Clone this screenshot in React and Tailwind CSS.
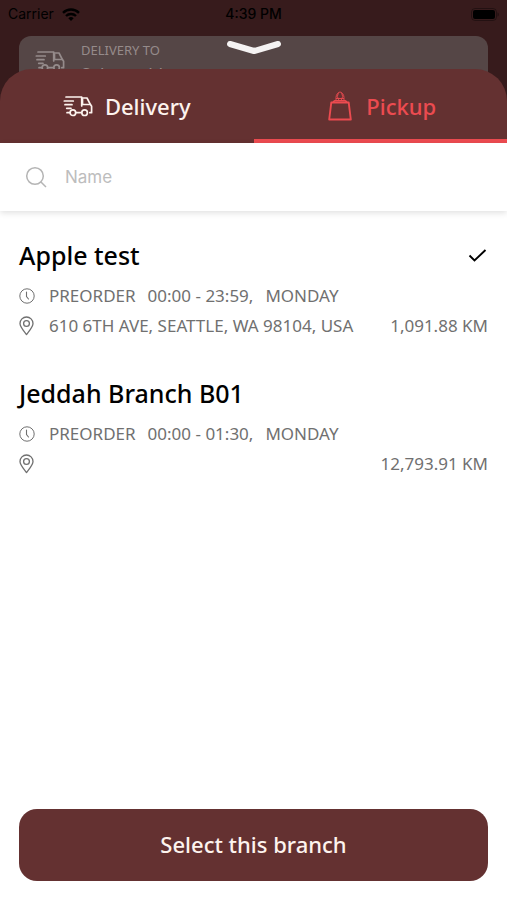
import { useState } from 'react'

const branches = [
  {
    id: 1,
    name: 'Apple test',
    hours: '00:00 - 23:59,',
    day: 'MONDAY',
    address: '610 6TH AVE, SEATTLE, WA 98104, USA',
    distance: '1,091.88 KM'
  },
  {
    id: 2,
    name: 'Jeddah Branch B01',
    hours: '00:00 - 01:30,',
    day: 'MONDAY',
    address: '',
    distance: '12,793.91 KM'
  }
]

function TruckIcon({ className }) {
  return (
    <svg className={className} viewBox="0 0 30 22" fill="none" stroke="currentColor" strokeWidth="1.700" strokeLinecap="round" strokeLinejoin="round" aria-hidden="true">
      <path d="M3 2h15.700v9M1.300 6h9M2 9.700h7M3.700 13.300h4.300M4 17.700h3" />
      <path d="M18.700 3h5.300l3.300 6.300 1.300 2v6.400h-1.800M12.800 17.700h5.700" />
      <path d="M19.500 4v5.500h7.500" />
      <circle cx="9.900" cy="17.700" r="2.800" />
      <circle cx="21.600" cy="17.700" r="2.800" />
    </svg>
  )
}

function BagIcon({ className }) {
  return (
    <svg className={className} viewBox="0 0 24 30" fill="none" stroke="currentColor" strokeLinejoin="round" aria-hidden="true">
      <path strokeWidth="1.900" d="M3.300 11.500h17.400l2.100 17H1.200z" />
      <path strokeWidth="1.500" d="M5 11l2-1.300h10l2 1.300" />
      <path strokeWidth="0.900" d="M8 9.500V6.500C8 4 10 1 12 1s4 3 4 5.500v3M10.500 1.700L9.300 5.500l1.700 4M13.500 1.700l1.200 3.800-1.700 4M8 7.500h8" />
    </svg>
  )
}

function ClockIcon() {
  return (
    <svg className="w-4 h-4 shrink-0" viewBox="0 0 16 16" fill="none" stroke="currentColor" aria-hidden="true">
      <circle cx="8" cy="8" r="7.200" strokeWidth="1" />
      <path strokeWidth="1.100" strokeLinecap="round" d="M7.500 4v4.500l2 2.500" />
    </svg>
  )
}

function PinIcon() {
  return (
    <svg className="w-4 h-5 shrink-0" viewBox="0 0 16 20" fill="none" stroke="currentColor" strokeWidth="1.300" strokeLinejoin="round" aria-hidden="true">
      <path d="M7.500 18.500C4.500 14.500 1 11 1 7.500a6.500 6.500 0 0 1 13 0c0 3.500-3.500 7-6.500 11z" />
      <circle cx="7.500" cy="7.500" r="2.900" />
    </svg>
  )
}

function StatusBar() {
  return (
    <div className="grid grid-cols-3 items-center h-7 px-2 text-sm text-black font-['Inter','Liberation_Sans',sans-serif]">
      <div className="flex items-center gap-2">
        <span>Carrier</span>
        <svg className="w-[18px] h-[13px]" viewBox="0 0 18 13" fill="none" stroke="currentColor" strokeWidth="2.400" aria-hidden="true">
          <path d="M1 4.800a11.500 11.500 0 0 1 16 0" />
          <path d="M4 8a7.200 7.200 0 0 1 10 0" />
          <path d="M6.300 10.200L9 13l2.700-2.800a4 4 0 0 0-5.400 0z" fill="currentColor" stroke="none" />
        </svg>
      </div>
      <span className="text-center font-medium">4:39 PM</span>
      <svg className="w-7 h-[13px] justify-self-end" viewBox="0 0 28 13" aria-hidden="true">
        <rect x="0.500" y="0.500" width="25" height="12" rx="3.500" fill="none" stroke="currentColor" opacity="0.350" />
        <rect x="2" y="2" width="22" height="9" rx="2" fill="currentColor" />
        <path d="M26.500 4.500v4c1-.4 1.300-1 1.300-2s-.3-1.600-1.300-2z" fill="currentColor" opacity="0.400" />
      </svg>
    </div>
  )
}

function BranchItem({ branch, selected, onSelect }) {
  return (
    <li>
      <button type="button" aria-pressed={selected} onClick={onSelect} className="block w-full text-left">
        <span className="flex items-center justify-between h-10 text-[25px] font-medium text-black">
          {branch.name}
          {selected && (
            <svg className="w-5 h-5" viewBox="0 0 20 20" fill="none" stroke="currentColor" strokeWidth="1.900" aria-hidden="true">
              <path d="M1.500 9.500l5 5L17.500 4" />
            </svg>
          )}
        </span>
        <span className="flex items-center h-10 text-[17px] text-[#707070]">
          <ClockIcon />
          <span className="ml-3.5">PREORDER</span>
          <span className="ml-3">{branch.hours}</span>
          <span className="ml-3">{branch.day}</span>
        </span>
        <span className="flex items-center h-5 text-[17px] text-[#707070]">
          <PinIcon />
          <span className="ml-3.5 flex-1">{branch.address}</span>
          <span>{branch.distance}</span>
        </span>
      </button>
    </li>
  )
}

export default function App() {
  const [tab, setTab] = useState('pickup')
  const [selectedId, setSelectedId] = useState(1)
  const [query, setQuery] = useState('')

  const visible = branches.filter((b) => b.name.toLowerCase().includes(query.toLowerCase()))

  return (
    <div className="flex flex-col min-h-screen bg-[#371b1c] font-['Noto_Sans','Open_Sans',sans-serif]">
      <StatusBar />

      {/* Dimmed page behind the sheet */}
      <div className="relative mx-[19px] mt-2 h-16 pl-4 pt-1.5 flex gap-4 rounded-xl bg-[#554646] text-[#958b8b]">
        <TruckIcon className="w-[30px] h-[22px] mt-2" />
        <div>
          <div className="text-[13px] leading-4">DELIVERY TO</div>
          <div className="text-[17px] leading-6 mt-1">Select address</div>
        </div>
        <button type="button" aria-label="Close" className="absolute top-1 left-1/2 -translate-x-1/2 text-[#f5f3f3]">
          <svg className="w-14 h-4" viewBox="0 0 56 16" fill="none" stroke="currentColor" strokeWidth="6" strokeLinecap="round" strokeLinejoin="round" aria-hidden="true">
            <path d="M4 4l24 7 24-7" />
          </svg>
        </button>
      </div>

      {/* Sheet */}
      <div className="relative flex-1 flex flex-col -mt-[31px]">
        <div role="tablist" className="grid grid-cols-2 h-[74px] rounded-t-[32px] bg-[#643131] text-[22px] font-medium">
          <button
            type="button"
            role="tab"
            aria-selected={tab === 'delivery'}
            onClick={() => setTab('delivery')}
            className={`flex items-center justify-center gap-3 border-b-4 pt-1 ${tab === 'delivery' ? 'border-[#ec4b50] text-[#ec4b50]' : 'border-transparent text-[#fdf3ee]'}`}
          >
            <TruckIcon className="w-[30px] h-[22px]" />
            Delivery
          </button>
          <button
            type="button"
            role="tab"
            aria-selected={tab === 'pickup'}
            onClick={() => setTab('pickup')}
            className={`flex items-center justify-center gap-3.5 border-b-4 pt-1 pl-1 ${tab === 'pickup' ? 'border-[#ec4b50] text-[#ec4b50]' : 'border-transparent text-[#fdf3ee]'}`}
          >
            <BagIcon className="w-6 h-[30px]" />
            Pickup
          </button>
        </div>

        <div className="flex-1 flex flex-col bg-white">
          <label className="flex items-center gap-4 h-[68px] pl-[25px] pr-5 shadow-[0_2px_6px_rgba(0,0,0,0.12)]">
            <svg className="w-6 h-6 text-[#b5b5b5]" viewBox="0 0 24 24" fill="none" stroke="currentColor" strokeWidth="1.500" aria-hidden="true">
              <circle cx="10" cy="11" r="8.300" />
              <path d="M16 17l5 5" />
            </svg>
            <input
              type="text"
              aria-label="Name"
              placeholder="Name"
              value={query}
              onChange={(e) => setQuery(e.target.value)}
              className="flex-1 min-w-0 pt-0.5 text-[17px] text-black outline-none placeholder:text-[#bdbdbd] font-['Inter','Liberation_Sans',sans-serif]"
            />
          </label>

          <ul className="flex-1 flex flex-col gap-[38px] px-[19px] pt-[25px]">
            {visible.map((b) => (
              <BranchItem key={b.id} branch={b} selected={b.id === selectedId} onSelect={() => setSelectedId(b.id)} />
            ))}
          </ul>

          <div className="px-[19px] pb-[19px]">
            <button type="button" className="w-full h-[72px] pb-0.5 rounded-[18px] bg-[#643131] text-[22px] font-medium text-[#fdf3ee]">
              Select this branch
            </button>
          </div>
        </div>
      </div>
    </div>
  )
}
